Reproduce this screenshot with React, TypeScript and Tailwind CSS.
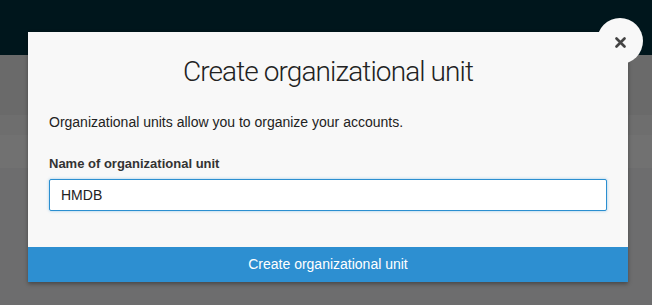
import React from "react";

export default function App() {
  return (
    <div className="relative h-[305px] w-[652px] overflow-hidden bg-[#6e6e6e] font-['Liberation_Sans',Arial,sans-serif]">
      <div className="flex flex-col">
        <div className="h-[55px] bg-[#00161c]" />
        <div className="h-[60px] bg-[#6a6a6a]" />
        <div className="h-[20px] bg-[#6e6e6e]" />
        <div className="h-[33px] bg-[#717171]" />
        <div className="h-[137px] bg-[#6d6d6e]" />
      </div>

      <div className="absolute left-[28px] top-[32px] w-[600px] bg-[#f8f8f8] shadow-[0_2px_4px_rgba(0,0,0,0.35)]">
        <div className="px-[21px] pt-[23px] pb-[36px]">
          <h1 className="text-center font-['Roboto',sans-serif] text-[28px] font-light leading-[34px] tracking-[-0.9px] text-[#222]">
            Create organizational unit
          </h1>
          <p className="mt-[23px] text-[14px] leading-[20px] text-[#222]">
            Organizational units allow you to organize your accounts.
          </p>
          <label className="mt-[23px] block text-[13px] font-bold leading-[18px] text-[#333]">
            Name of organizational unit
          </label>
          <div className="mt-[6px] flex h-[32px] items-center rounded-[2px] border border-[#2b8fd0] bg-white px-[11px] text-[14px] text-[#222] shadow-[0_0_3px_rgba(43,143,208,0.45)]">
            HMDB
          </div>
        </div>
        <div className="flex h-[35px] items-center justify-center bg-[#2d8fd1] text-[14px] text-white">
          Create organizational unit
        </div>
      </div>

      <div className="absolute left-[597px] top-[18px] flex h-[46px] w-[46px] items-center justify-center rounded-full bg-[#f8f8f8]">
        <svg width="11" height="11" viewBox="0 0 11 11" className="mt-[3px]">
          <path d="M1.5 1.5 L9.5 9.5 M9.5 1.5 L1.5 9.5" stroke="#444" strokeWidth="2.6" strokeLinecap="round" />
        </svg>
      </div>
    </div>
  );
}
